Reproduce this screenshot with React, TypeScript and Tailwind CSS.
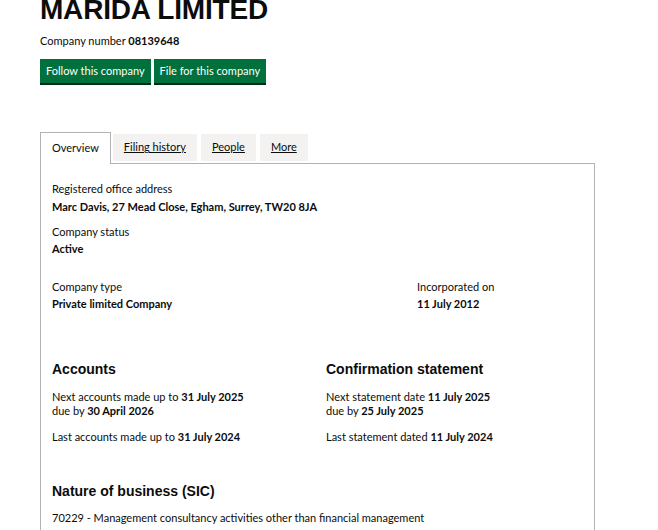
export default function App() {
  const body = "font-['Lato',sans-serif] text-[11px] text-[#0b0c0c]";
  const head = "font-['Liberation_Sans',Arial,sans-serif] font-bold text-[#0b0c0c]";

  return (
    <div className={`w-[658px] h-[530px] overflow-hidden bg-white ${body}`}>
      <div className="pl-10 w-[595px]">
        {/* title */}
        <h1 className={`${head} text-[28px] leading-[28px] -mt-[4px] tracking-[-0.2px]`}>MARIDA LIMITED</h1>
        <p className="mt-[10px] leading-[14px]">
          Company number <b>08139648</b>
        </p>
        <div className="flex gap-[3px] mt-[11px]">
          <button className="bg-[#00703c] text-white h-[24px] px-[6px] shadow-[0_2px_0_#002d18] leading-[24px]">
            Follow this company
          </button>
          <button className="bg-[#00703c] text-white h-[24px] px-[6px] shadow-[0_2px_0_#002d18] leading-[24px]">
            File for this company
          </button>
        </div>

        {/* tabs */}
        <div className="flex items-end mt-[49px] border-b border-[#b1b4b6]">
          <div className="h-[32px] px-[11px] border border-b-0 border-[#b1b4b6] bg-white -mb-px pb-px flex items-center">
            Overview
          </div>
          <div className="h-[27px] ml-[2px] mb-[2px] px-[11px] bg-[#f3f2f1] flex items-center underline">
            Filing history
          </div>
          <div className="h-[27px] ml-[4px] mb-[2px] px-[11px] bg-[#f3f2f1] flex items-center underline">
            People
          </div>
          <div className="h-[27px] ml-[4px] mb-[2px] px-[11px] bg-[#f3f2f1] flex items-center underline">
            More
          </div>
        </div>

        {/* panel */}
        <div className="border-x border-[#b1b4b6] px-[11px] pt-[18px] pb-10 leading-[14px]">
          <p>Registered office address</p>
          <p className="font-bold mt-[4px]">Marc Davis, 27 Mead Close, Egham, Surrey, TW20 8JA</p>

          <p className="mt-[11px]">Company status</p>
          <p className="font-bold mt-[3px]">Active</p>

          <div className="grid grid-cols-[365px_1fr] mt-[24px]">
            <div>
              <p>Company type</p>
              <p className="font-bold mt-[3px]">Private limited Company</p>
            </div>
            <div>
              <p>Incorporated on</p>
              <p className="font-bold mt-[3px]">11 July 2012</p>
            </div>
          </div>

          <div className="grid grid-cols-[274px_1fr] mt-[50px]">
            <div>
              <h2 className={`${head} text-[14px] leading-[16px]`}>Accounts</h2>
              <p className="mt-[13px]">
                Next accounts made up to <b>31 July 2025</b>
              </p>
              <p>
                due by <b>30 April 2026</b>
              </p>
              <p className="mt-[12px]">
                Last accounts made up to <b>31 July 2024</b>
              </p>
            </div>
            <div>
              <h2 className={`${head} text-[14px] leading-[16px]`}>Confirmation statement</h2>
              <p className="mt-[13px]">
                Next statement date <b>11 July 2025</b>
              </p>
              <p>
                due by <b>25 July 2025</b>
              </p>
              <p className="mt-[12px]">
                Last statement dated <b>11 July 2024</b>
              </p>
            </div>
          </div>

          <h2 className={`${head} text-[14px] leading-[16px] mt-[39px]`}>Nature of business (SIC)</h2>
          <p className="mt-[12px]">70229 - Management consultancy activities other than financial management</p>
        </div>
      </div>
    </div>
  );
}
